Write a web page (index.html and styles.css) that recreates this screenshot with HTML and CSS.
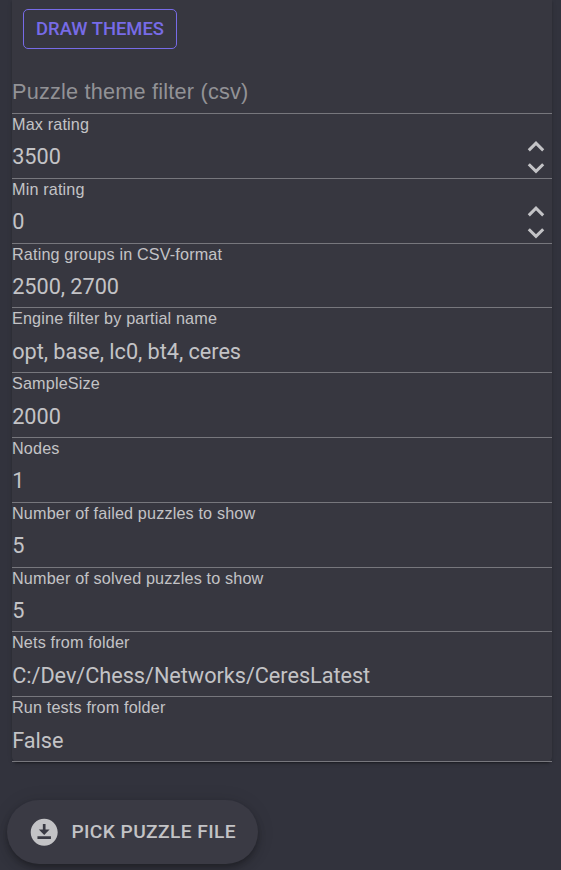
FILE: index.html
```html
<!DOCTYPE html>
<html lang="en">
<head>
<meta charset="utf-8">
<title>Puzzle settings</title>
<link rel="stylesheet" href="styles.css">
</head>
<body>
<main class="paper">
  <div class="toolbar"><button class="outlined">DRAW THEMES</button></div>
  <div class="field"><span class="placeholder">Puzzle theme filter (csv)</span></div>
  <div class="field"><label>Max rating</label><span class="value">3500</span>
    <svg class="spin" viewBox="0 0 20 40"><path d="M2.8 12.4 10 5.2l7.2 7.2M2.8 26.2l7.2 7.2 7.2-7.2"/></svg></div>
  <div class="field"><label>Min rating</label><span class="value">0</span>
    <svg class="spin" viewBox="0 0 20 40"><path d="M2.8 12.4 10 5.2l7.2 7.2M2.8 26.2l7.2 7.2 7.2-7.2"/></svg></div>
  <div class="field"><label>Rating groups in CSV-format</label><span class="value">2500, 2700</span></div>
  <div class="field"><label>Engine filter by partial name</label><span class="value">opt, base, lc0, bt4, ceres</span></div>
  <div class="field"><label>SampleSize</label><span class="value">2000</span></div>
  <div class="field"><label>Nodes</label><span class="value">1</span></div>
  <div class="field"><label>Number of failed puzzles to show</label><span class="value">5</span></div>
  <div class="field"><label>Number of solved puzzles to show</label><span class="value">5</span></div>
  <div class="field"><label>Nets from folder</label><span class="value">C:/Dev/Chess/Networks/CeresLatest</span></div>
  <div class="field"><label>Run tests from folder</label><span class="value">False</span></div>
</main>
<button class="fab">
  <svg class="download" viewBox="0 0 24 24"><path d="M12 2C6.49 2 2 6.49 2 12s4.49 10 10 10 10-4.49 10-10S17.51 2 12 2zm-1 8V6h2v4h3l-4 4-4-4h3zm6 7H7v-2h10v2z"/></svg>
  <span>PICK PUZZLE FILE</span>
</button>
</body>
</html>
```
FILE: styles.css
```css
* { box-sizing: border-box; }
body {
  margin: 0;
  height: 870px;
  overflow: hidden;
  background: #32333d;
  color: #c3c3c6;
  font-family: Roboto, sans-serif;
}
button { font-family: inherit; font-weight: 500; cursor: pointer; }
.paper {
  width: 540px;
  margin-left: 12px;
  background: #373740;
  border-radius: 0 0 5px 5px;
  box-shadow: 0 3px 1px -2px rgba(0,0,0,.2), 0 2px 2px rgba(0,0,0,.14), 0 1px 5px rgba(0,0,0,.12);
}
.toolbar { height: 49.2px; padding: 9px 0 0 11px; }
.outlined {
  display: block;
  width: 154px;
  height: 40px;
  padding: 0;
  border: 1px solid #776be7;
  border-radius: 5px;
  background: transparent;
  color: #776be7;
  font-size: 18.4px;
  line-height: 38px;
  letter-spacing: 0;
}
.field {
  position: relative;
  height: 64.8px;
  border-bottom: 1px solid #77777d;
  display: flex;
  flex-direction: column;
}
.field label {
  height: 21.5px;
  font: 16.2px/20.6px "Liberation Sans", sans-serif;
  letter-spacing: .00938em;
}
.value {
  height: 42px;
  padding-left: .2px;
  font-size: 21.7px;
  line-height: 43.6px;
  letter-spacing: -.04px;
}
.placeholder {
  margin-top: 22px;
  font: 21.7px/41px "Liberation Sans", sans-serif;
  letter-spacing: .00938em;
  color: #929296;
}
.spin {
  position: absolute;
  right: 6px;
  top: 24px;
  width: 20px;
  height: 40px;
  fill: none;
  stroke: #c3c3c6;
  stroke-width: 3;
}
.fab {
  display: flex;
  align-items: center;
  gap: 11px;
  width: 251px;
  height: 64px;
  margin: 38px 0 0 7px;
  padding: 0 0 0 21px;
  border: 0;
  border-radius: 32px;
  background: #3a3a44;
  color: #c3c3c6;
  font-size: 19.2px;
  letter-spacing: .4px;
  white-space: nowrap;
  box-shadow: 0 3px 5px -1px rgba(0,0,0,.2), 0 6px 10px rgba(0,0,0,.14), 0 1px 18px rgba(0,0,0,.12);
}
.download { flex: none; width: 32.4px; height: 32.4px; fill: currentColor; }
```
